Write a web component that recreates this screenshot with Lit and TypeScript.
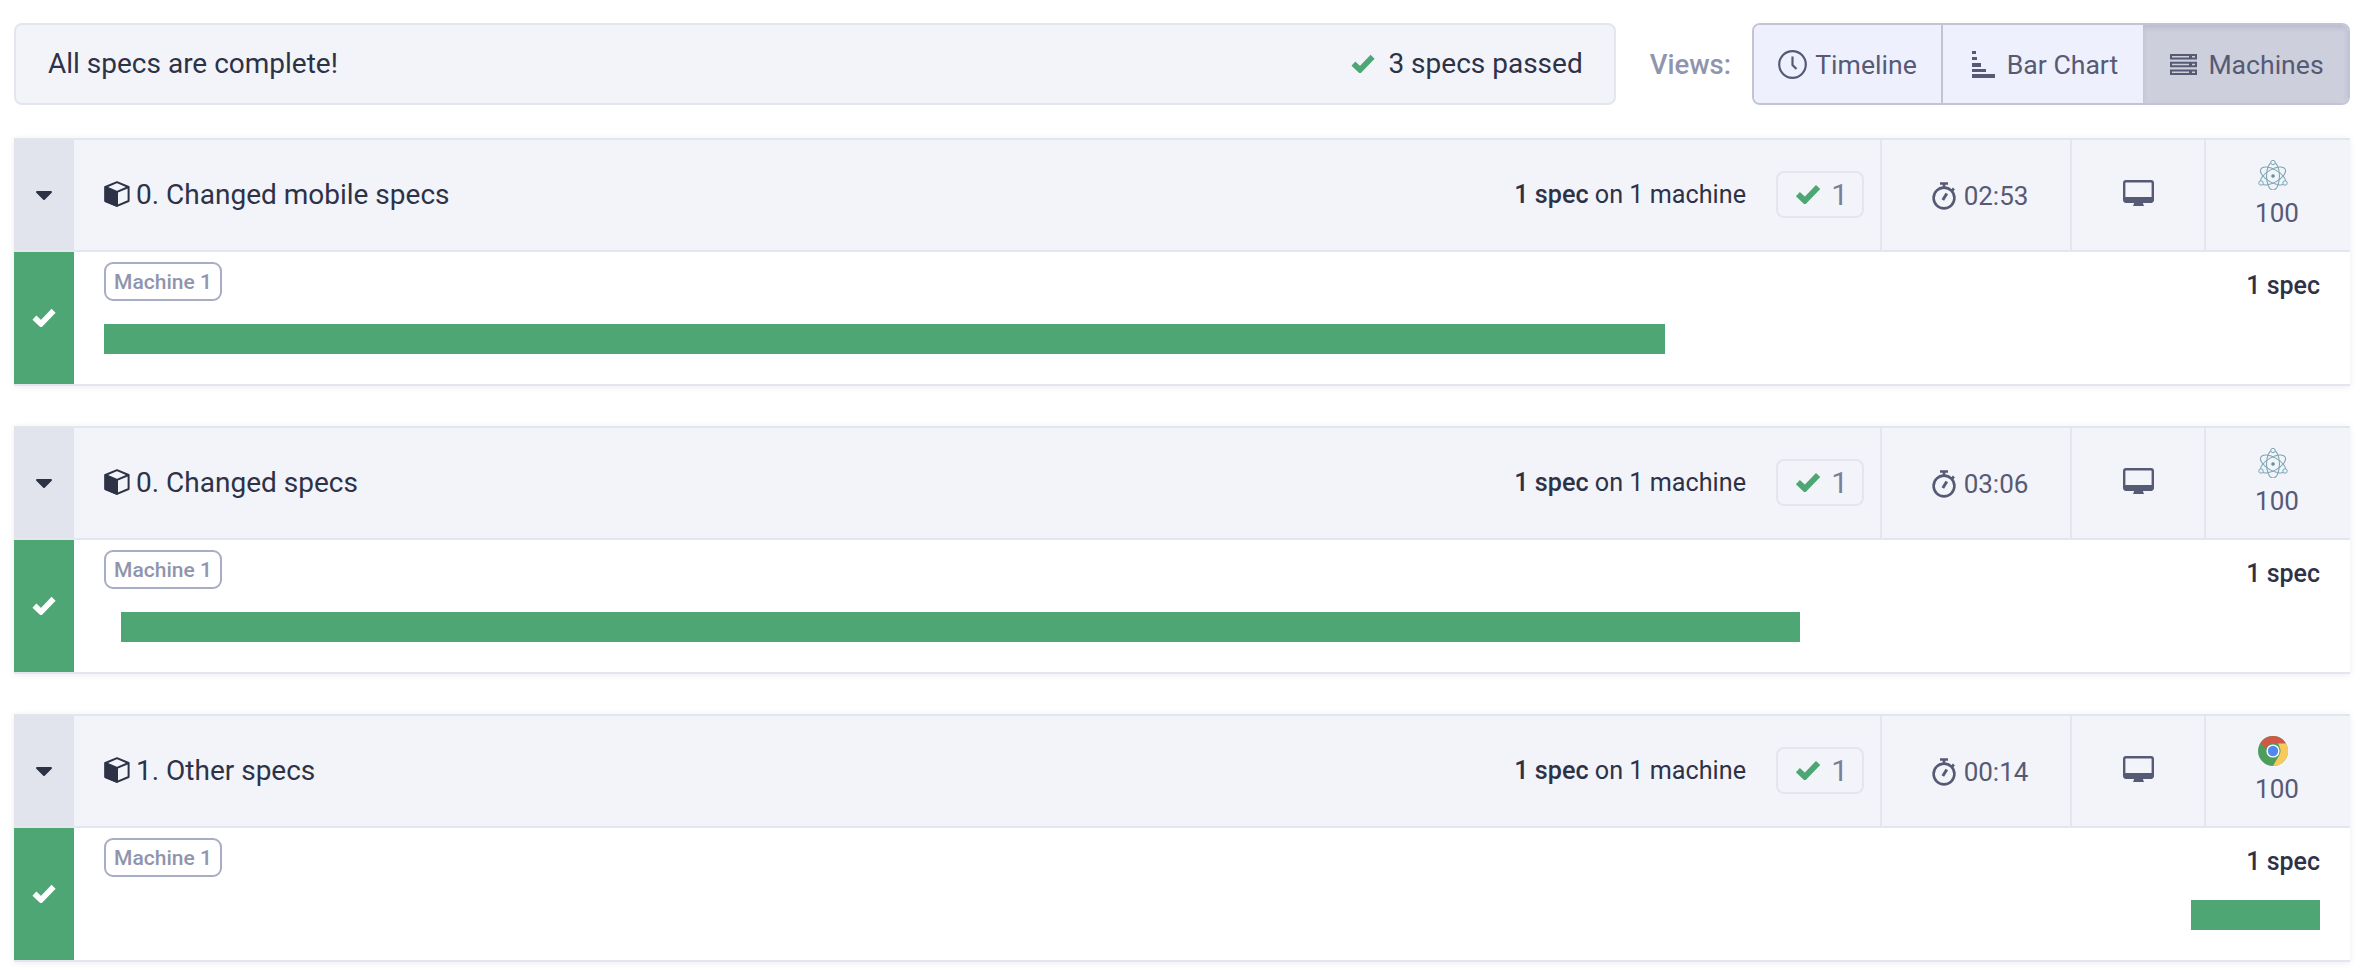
import { LitElement, html, css, svg } from "lit";
import { customElement } from "lit/decorators.js";

const check = (cls: string) => html`<svg class=${cls} viewBox="0 0 24 19"><path d="M2.4 9.6l6.600 6.300L21.600 2.800" fill="none" stroke="currentColor" stroke-width="5.600" stroke-linejoin="miter"/></svg>`;

const electron = svg`<g fill="none" stroke="#7ba6b5" stroke-width="1.100">
  <ellipse cx="15" cy="16" rx="14" ry="6.500" transform="rotate(30 15 16)"/>
  <ellipse cx="15" cy="16" rx="14" ry="6.500" transform="rotate(90 15 16)"/>
  <ellipse cx="15" cy="16" rx="14" ry="6.500" transform="rotate(150 15 16)"/>
  </g>
  <circle cx="15" cy="16" r="1.800" fill="#5b8ea1"/>
  <circle cx="15" cy="2.500" r="2.200" fill="#f3f4fa" stroke="#7ba6b5"/>
  <circle cx="3" cy="23" r="2.200" fill="#f3f4fa" stroke="#7ba6b5"/>
  <circle cx="27" cy="23" r="2.200" fill="#f3f4fa" stroke="#7ba6b5"/>`;

const chrome = svg`
  <circle cx="15" cy="15" r="15" fill="#4e9d5c"/>
  <path d="M15 0a15 15 0 0 1 13 7.500H15a7.500 7.500 0 0 0-7.200 5.400L2.400 7A15 15 0 0 1 15 0z" fill="#cf5846"/>
  <path d="M28 7.500A15 15 0 0 1 15 30l6.400-11.300A7.500 7.500 0 0 0 21.500 11 7 7 0 0 0 20 7.500z" fill="#f6cb5c"/>
  <circle cx="15" cy="15" r="6.600" fill="#fff"/>
  <circle cx="15" cy="15" r="5.200" fill="#5187ee"/>`;

interface Run {
  title: string;
  time: string;
  browser: "electron" | "chrome";
  left: number;
  width: number;
}

const RUNS: Run[] = [
  { title: "0. Changed mobile specs", time: "02:53", browser: "electron", left: 0, width: 1561 },
  { title: "0. Changed specs", time: "03:06", browser: "electron", left: 17, width: 1679 },
  { title: "1. Other specs", time: "00:14", browser: "chrome", left: 2087, width: 129 },
];

@customElement("app-root")
export class AppRoot extends LitElement {
  static styles = css`
    :host {
      display: block;
      font-family: Roboto, "Liberation Sans", sans-serif;
      color: #2e3247;
      background: #fff;
      padding: 23px 20px 14px 14px;
    }
    svg { display: block; flex: none; }
    .top { display: flex; align-items: stretch; height: 82px; }
    .banner {
      flex: 1;
      display: flex;
      align-items: center;
      justify-content: space-between;
      background: #f3f4fa;
      border: 2px solid #e3e5ef;
      border-radius: 8px;
      padding: 0 31px 2px 32px;
      font-size: 28px;
    }
    .passed { display: flex; align-items: center; gap: 13px; }
    .chk { width: 24px; height: 19px; color: #4fa675; }
    .chip .chk { width: 26px; height: 20px; }
    .white { width: 24px; height: 19px; }
    .views-label {
      margin-left: 34px;
      margin-right: 21px;
      align-self: center;
      font-size: 27.5px;
      font-weight: 500;
      color: #9095ad;
    }
    .views {
      display: flex;
      box-sizing: border-box;
      width: 598px;
      border: 2px solid #c2c4d6;
      border-radius: 8px;
      overflow: hidden;
      color: #565a75;
      font-size: 26.6px;
    }
    .view {
      display: flex;
      align-items: center;
      justify-content: center;
      box-sizing: border-box;
      background: #eef0fd;
      gap: 8px;
    }
    .view.t { width: 189px; border-right: 2px solid #c2c4d6; }
    .view.b { width: 200px; gap: 12px; padding-left: 4px; }
    .view.m { flex: 1; gap: 11px; padding-left: 3px; background: #cdcfdd; box-shadow: inset 0 3px 5px rgba(80, 84, 110, 0.14); }
    .card {
      margin-top: 40px;
      border-top: 2px solid #e3e5ef;
      border-bottom: 2px solid #e3e5ef;
      box-shadow: 0 1px 6px rgba(90, 95, 122, 0.12);
      background: #fff;
    }
    .card.first { margin-top: 33px; }
    .head {
      display: flex;
      height: 110px;
      background: #f3f4fa;
      border-bottom: 2px solid #e3e5ef;
    }
    .toggle {
      width: 60px;
      flex: none;
      background: #e1e3ed;
      display: flex;
      align-items: center;
      justify-content: center;
    }
    .caret { width: 16px; height: 9px; }
    .main {
      flex: 1;
      display: flex;
      align-items: center;
      padding: 0 16px 2px 30px;
      font-size: 28px;
    }
    .cube { width: 26px; height: 26px; margin-right: 6px; }
    .title { flex: 1; }
    .count { font-size: 25.2px; }
    .count b { font-weight: 500; }
    .chip {
      display: flex;
      align-items: center;
      justify-content: space-between;
      width: 88px;
      height: 47px;
      box-sizing: border-box;
      margin-left: 30px;
      padding: 0 14px 0 17px;
      border: 2px solid #e3e5ef;
      border-radius: 8px;
      font-size: 30px;
      color: #7a7f99;
    }
    .cell {
      flex: none;
      display: flex;
      align-items: center;
      justify-content: center;
      border-left: 2px solid #e3e5ef;
      color: #565a75;
      font-size: 26px;
      box-sizing: border-box;
    }
    .time { width: 190px; gap: 8px; padding: 2px 0 0 8px; }
    .mon { width: 134px; padding-bottom: 4px; }
    .brow { width: 146px; flex-direction: column; gap: 8px; padding: 0 2px 2px 0; }
    .brow svg { margin-right: 8px; }
    .body { display: flex; height: 132px; }
    .status {
      width: 60px;
      flex: none;
      background: #4fa675;
      color: #fff;
      display: flex;
      align-items: center;
      justify-content: center;
      padding-bottom: 2px;
      box-sizing: border-box;
    }
    .lane { flex: 1; padding: 10px 30px 0 30px; min-width: 0; }
    .lane-top { display: flex; justify-content: space-between; align-items: flex-start; height: 62px; }
    .tag {
      box-sizing: border-box;
      height: 39px;
      width: 118px;
      display: flex;
      align-items: center;
      justify-content: center;
      border: 2px solid #a9adc4;
      border-radius: 9px;
      font-size: 21px;
      font-weight: 500;
      color: #9095ad;
    }
    .spec-n { font-size: 25px; font-weight: 500; margin-top: 9px; }
    .bar { height: 30px; background: #4fa675; }
  `;

  private card(r: Run, i: number) {
    return html`<section class="card ${i === 0 ? "first" : ""}">
      <div class="head">
        <div class="toggle"><svg class="caret" viewBox="0 0 16 9"><path d="M1 0h14a1 1 0 0 1 .7 1.700L8.700 8.700a1 1 0 0 1-1.400 0L.3 1.700A1 1 0 0 1 1 0z" fill="#2e3247"/></svg></div>
        <div class="main">
          <svg class="cube" viewBox="0 0 26 26"><path d="M13 1.200L24.600 6v14L13 24.800 1.400 20V6z" fill="none" stroke="#2e3247" stroke-width="2" stroke-linejoin="round"/><path d="M1.400 6L13 10.800v14L1.400 20z" fill="#2e3247" stroke="#2e3247" stroke-width="2" stroke-linejoin="round"/><path d="M13 10.800L24.600 6" stroke="#2e3247" stroke-width="2"/></svg>
          <span class="title">${r.title}</span>
          <span class="count"><b>1 spec</b> on 1 machine</span>
          <span class="chip">${check("chk")}<span>1</span></span>
        </div>
        <div class="cell time">
          <svg width="24" height="28" viewBox="0 0 24 28"><path d="M8 1.500h8M12 1.500v4M20 6.500l2 2" fill="none" stroke="#565a75" stroke-width="2.600"/><circle cx="12" cy="16" r="10.400" fill="none" stroke="#565a75" stroke-width="2.600"/><path d="M10.800 18l4-6.500" stroke="#565a75" stroke-width="3"/></svg>
          <span>${r.time}</span>
        </div>
        <div class="cell mon">
          <svg width="31" height="26" viewBox="0 0 31 26"><path d="M3 1.200h25a1.800 1.800 0 0 1 1.800 1.800v17a1.800 1.800 0 0 1-1.800 1.800H3A1.800 1.800 0 0 1 1.200 20V3A1.800 1.800 0 0 1 3 1.200z" fill="none" stroke="#565a75" stroke-width="2.400"/><path d="M1 17h29v3.500a2 2 0 0 1-2 2H3a2 2 0 0 1-2-2z" fill="#565a75"/><path d="M11 22h9v1.500l1 2.500H10l1-2.500z" fill="#565a75"/></svg>
        </div>
        <div class="cell brow">
          <svg width="30" height="30" viewBox="0 0 30 30">${r.browser === "chrome" ? chrome : electron}</svg>
          <span>100</span>
        </div>
      </div>
      <div class="body">
        <div class="status">${check("white")}</div>
        <div class="lane">
          <div class="lane-top"><span class="tag">Machine 1</span><span class="spec-n">1 spec</span></div>
          <div class="bar" style="margin-left:${r.left}px;width:${r.width}px"></div>
        </div>
      </div>
    </section>`;
  }

  render() {
    return html`
      <div class="top">
        <div class="banner">
          <span>All specs are complete!</span>
          <span class="passed">${check("chk")}<span>3 specs passed</span></span>
        </div>
        <span class="views-label">Views:</span>
        <div class="views">
          <div class="view t">
            <svg width="29" height="29" viewBox="0 0 29 29"><circle cx="14.500" cy="14.500" r="13.300" fill="none" stroke="#565a75" stroke-width="2.200"/><path d="M14.500 6.500v8.500l4 4" fill="none" stroke="#565a75" stroke-width="2.200"/></svg>
            <span>Timeline</span>
          </div>
          <div class="view b">
            <svg width="23" height="27" viewBox="0 0 23 27"><g fill="#565a75"><rect x="0" y="0" width="4" height="3"/><rect x="0" y="6" width="5" height="3"/><rect x="0" y="12" width="9" height="4"/><rect x="0" y="18" width="14" height="3"/><rect x="0" y="23" width="23" height="4"/></g></svg>
            <span>Bar Chart</span>
          </div>
          <div class="view m">
            <svg width="27" height="21" viewBox="0 0 27 21"><g fill="#565a75"><path d="M0 0h27v5.500H0zM0 7.750h27v5.500H0zM0 15.500h27V21H0z"/></g><g fill="#cdcfdd"><rect x="2" y="2" width="17" height="1.500"/><rect x="2" y="9.750" width="17" height="1.500"/><rect x="2" y="17.500" width="17" height="1.500"/><rect x="22" y="2" width="3" height="1.500"/><rect x="22" y="9.750" width="3" height="1.500"/><rect x="22" y="17.500" width="3" height="1.500"/></g></svg>
            <span>Machines</span>
          </div>
        </div>
      </div>
      ${RUNS.map((r, i) => this.card(r, i))}
    `;
  }
}
